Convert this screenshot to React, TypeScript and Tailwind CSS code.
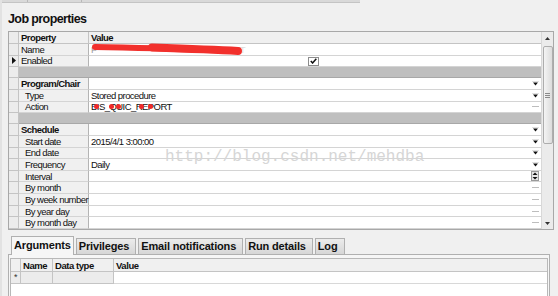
import type { ReactNode } from "react";

type Row =
  | { kind: "sep" }
  | { kind: "cat"; label: string; icon?: Icon }
  | { kind: "item"; label: string; value?: ReactNode; icon?: Icon; indent?: boolean; current?: boolean };

type Icon = "drop" | "dots" | "spin";

function DropIcon() {
  return (
    <svg width="7" height="5" viewBox="0 0 7 5" className="block">
      <rect x="0" y="0" width="7" height="1" fill="#e0e0e0" />
      <path d="M1 1.5 L6 1.5 L3.5 4.5 Z" fill="#111" />
    </svg>
  );
}

function DotsIcon() {
  return (
    <svg width="7" height="3" viewBox="0 0 7 3" className="block">
      <rect x="0" y="1" width="7" height="1" fill="#bdbdbd" />
    </svg>
  );
}

function SpinIcon() {
  return (
    <svg width="8" height="10" viewBox="0 0 8 10" className="block">
      <rect x="0.5" y="0.5" width="7" height="9" fill="#e6e6e6" stroke="#9a9a9a" />
      <path d="M1.5 4 L6.5 4 L4 1.5 Z" fill="#111" />
      <path d="M1.5 6 L6.5 6 L4 8.5 Z" fill="#111" />
    </svg>
  );
}

function RowIcon({ icon }: { icon?: Icon }) {
  if (!icon) return null;
  return (
    <div className="ml-auto mr-[2px] flex items-center">
      {icon === "drop" && <DropIcon />}
      {icon === "dots" && <DotsIcon />}
      {icon === "spin" && <SpinIcon />}
    </div>
  );
}

function NameValue() {
  return (
    <div className="relative h-full w-full">
      <span className="text-[#9a9a9a]">P</span>
      <span className="absolute left-[118px] top-0 text-[#dcdcdc]">REPORT</span>
      <svg className="absolute left-[1px] top-[-1px]" width="152" height="13" viewBox="0 0 152 13">
        <path d="M3 4 C 40 4.5, 90 6, 146 8" stroke="#f2302c" strokeWidth="6" strokeLinecap="round" fill="none" />
        <path d="M60 4.5 C 90 5.5, 120 6.5, 146 8" stroke="#f2302c" strokeWidth="8" strokeLinecap="round" fill="none" />
      </svg>
    </div>
  );
}

function ActionValue() {
  const dots = [3, 18, 25, 48, 57];
  return (
    <div className="relative">
      <span>BIS_QUIC_REPORT</span>
      {dots.map((d, i) => (
        <span key={i} className="absolute top-[3px] w-[5px] h-[5px] rounded-full bg-[#f02a2a]" style={{ left: d }} />
      ))}
    </div>
  );
}

function Checkbox() {
  return (
    <div className="ml-[217px] mt-[1px] w-[11px] h-[9px] border border-[#8c8c8c] bg-white flex items-center justify-center">
      <svg width="7" height="6" viewBox="0 0 7 6">
        <path d="M0.8 3 L2.6 5 L6.3 0.8" stroke="#111" strokeWidth="1.5" fill="none" />
      </svg>
    </div>
  );
}

const rows: Row[] = [
  { kind: "item", label: "Name", value: <NameValue /> },
  { kind: "item", label: "Enabled", value: <Checkbox />, current: true },
  { kind: "sep" },
  { kind: "cat", label: "Program/Chair", icon: "drop" },
  { kind: "item", label: "Type", value: "Stored procedure", icon: "drop", indent: true },
  { kind: "item", label: "Action", value: <ActionValue />, icon: "dots", indent: true },
  { kind: "sep" },
  { kind: "cat", label: "Schedule", icon: "drop" },
  { kind: "item", label: "Start date", value: "2015/4/1 3:00:00", icon: "drop", indent: true },
  { kind: "item", label: "End date", icon: "drop", indent: true },
  { kind: "item", label: "Frequency", value: "Daily", icon: "drop", indent: true },
  { kind: "item", label: "Interval", icon: "spin", indent: true },
  { kind: "item", label: "By month", icon: "dots", indent: true },
  { kind: "item", label: "By week number", icon: "dots", indent: true },
  { kind: "item", label: "By year day", icon: "dots", indent: true },
  { kind: "item", label: "By month day", icon: "dots", indent: true },
];

function RowHeader({ current, star }: { current?: boolean; star?: boolean }) {
  return (
    <div className="w-[10px] shrink-0 h-full bg-[#ececec] border-r border-b border-[#c4c4c4] flex items-center justify-center">
      {current && (
        <svg width="4" height="7" viewBox="0 0 4 7">
          <path d="M0 0 L4 3.5 L0 7 Z" fill="#111" />
        </svg>
      )}
      {star && <span className="text-[9px] leading-none text-[#333]">*</span>}
    </div>
  );
}

function GridRow({ row }: { row: Row }) {
  if (row.kind === "sep") {
    return (
      <div className="flex h-[11.65px]">
        <RowHeader />
        <div className="flex-1 bg-[#bfbfbf] border-b border-[#a8a8a8]" />
      </div>
    );
  }
  const isCat = row.kind === "cat";
  return (
    <div className="flex h-[11.65px]">
      <RowHeader current={row.kind === "item" && row.current} />
      <div
        className={`w-[70px] shrink-0 bg-[#f0f0f0] border-r border-b border-r-[#b4b4b4] border-b-[#d4d4d4] flex items-center ${
          row.kind === "item" && row.indent ? "pl-[6px]" : "pl-[2px]"
        } ${isCat ? "font-bold" : ""}`}
      >
        <span className="whitespace-nowrap">{row.label}</span>
      </div>
      <div className="flex-1 bg-white border-b border-[#d4d4d4] flex items-center pl-[2px]">
        <div className="whitespace-nowrap">{row.kind === "item" ? row.value : null}</div>
        <RowIcon icon={row.icon} />
      </div>
    </div>
  );
}

function Scrollbar() {
  return (
    <div className="w-[12px] shrink-0 bg-[#ebebeb] border-l border-[#d8d8d8] flex flex-col items-center">
      <div className="h-[12px] flex items-center justify-center">
        <svg width="5" height="3" viewBox="0 0 5 3">
          <path d="M0 3 L5 3 L2.5 0 Z" fill="#333" />
        </svg>
      </div>
      <div className="mt-[2px] w-[10px] h-[98px] rounded-[2px] border border-[#adadad] bg-gradient-to-r from-[#f4f4f4] to-[#dcdcdc] flex flex-col items-center justify-center gap-[1px]">
        <div className="w-[5px] h-px bg-[#8a8a8a]" />
        <div className="w-[5px] h-px bg-[#8a8a8a]" />
        <div className="w-[5px] h-px bg-[#8a8a8a]" />
      </div>
      <div className="mt-auto h-[12px] flex items-center justify-center">
        <svg width="5" height="3" viewBox="0 0 5 3">
          <path d="M0 0 L5 0 L2.5 3 Z" fill="#333" />
        </svg>
      </div>
    </div>
  );
}

const tabs = ["Arguments", "Privileges", "Email notifications", "Run details", "Log"];

export default function App() {
  return (
    <div className="relative w-[558px] h-[296px] overflow-hidden bg-[#f0f0f0] text-[#111] font-['Liberation_Sans',Arial,sans-serif] border-l-2 border-[#e2e2e2]">
      {/* top strip */}
      <div className="flex h-[3px] w-[358px] bg-[#d9d9d9] border-b border-[#c4c4c4]">
        <div className="w-[26px] border-r border-[#b8b8b8]" />
        <div className="w-[54px] border-r border-[#b8b8b8]" />
      </div>

      <div className="h-[28px] pl-[6px] pt-[9px] text-[12.5px] leading-[14px] font-bold tracking-[-0.6px]">Job properties</div>

      {/* property grid */}
      <div className="ml-[6px] w-[546px] h-[199px] border border-[#a8a8a8] flex text-[9.5px] leading-[11px] tracking-[-0.55px]">
        <div className="flex-1 flex flex-col">
          <div className="flex h-[12px] font-bold">
            <div className="w-[10px] shrink-0 bg-[#ececec] border-r border-b border-[#c4c4c4]" />
            <div className="w-[70px] shrink-0 pl-[2px] bg-[#f0f0f0] border-r border-b border-[#c4c4c4] flex items-center">Property</div>
            <div className="flex-1 pl-[2px] bg-[#f0f0f0] border-b border-[#c4c4c4] flex items-center">Value</div>
          </div>
          {rows.map((r, i) => (
            <GridRow key={i} row={r} />
          ))}
        </div>
        <Scrollbar />
      </div>

      {/* watermark */}
      <div className="absolute left-[163px] top-[148px] font-['Liberation_Mono',monospace] text-[16px] leading-[18px] text-[#d6d6d6] pointer-events-none">
        http://blog.csdn.net/mehdba
      </div>

      {/* tabs */}
      <div className="mt-[5px] ml-[9px] flex items-end h-[19px] gap-[2px] text-[11px] font-bold tracking-[-0.15px]">
        {tabs.map((t, i) =>
          i === 0 ? (
            <div key={t} className="h-[19px] px-[2px] bg-[#f6f6f6] border border-b-0 border-[#b0b0b0] flex items-center relative z-10 -mb-px pb-px">
              {t}
            </div>
          ) : (
            <div key={t} className="h-[16px] px-[2px] bg-gradient-to-b from-[#ececec] to-[#d6d6d6] border border-b-0 border-[#b0b0b0] flex items-center pr-[6px]">
              {t}
            </div>
          )
        )}
      </div>

      {/* tab panel */}
      <div className="ml-[6px] w-[542px] h-[50px] border border-[#b0b0b0] bg-[#f6f6f6] pt-[3px] px-[1px]">
        <div className="h-full bg-white border border-[#b8b8b8] text-[9.5px] leading-[11px] tracking-[-0.45px]">
          <div className="flex h-[13px] font-bold bg-[#f0f0f0]">
            <div className="w-[10px] shrink-0 border-r border-b border-[#c4c4c4]" />
            <div className="w-[32px] shrink-0 pl-[2px] border-r border-b border-[#c4c4c4] flex items-center">Name</div>
            <div className="w-[61px] shrink-0 pl-[2px] border-r border-b border-[#c4c4c4] flex items-center">Data type</div>
            <div className="flex-1 pl-[2px] border-b border-[#c4c4c4] flex items-center">Value</div>
          </div>
          <div className="flex h-[12px]">
            <RowHeader star />
            <div className="w-[32px] shrink-0 bg-[#ececec] border-r border-b border-[#c4c4c4]" />
            <div className="w-[61px] shrink-0 bg-[#ececec] border-r border-b border-[#c4c4c4]" />
            <div className="flex-1 border-b border-[#d8d8d8]" />
          </div>
        </div>
      </div>
    </div>
  );
}
